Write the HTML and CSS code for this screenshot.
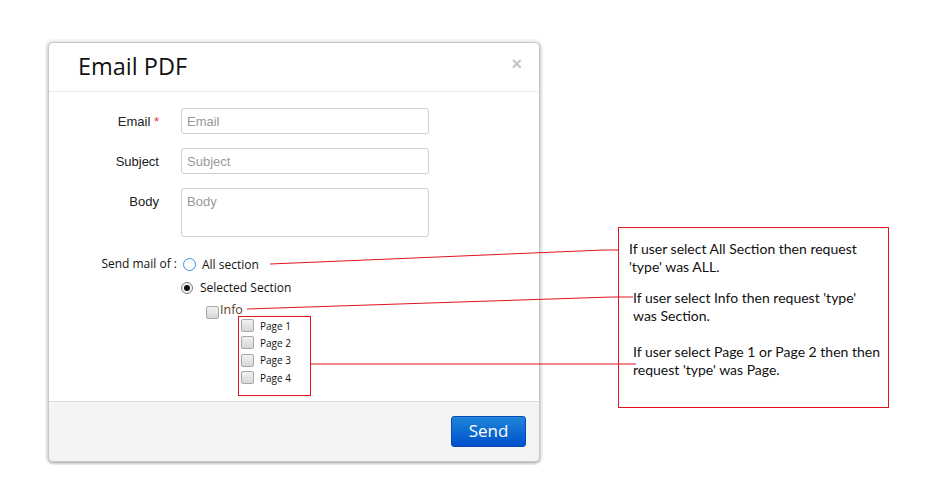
FILE: index.html
```html
<!DOCTYPE html>
<html>
<head>
<meta charset="utf-8">
<link rel="stylesheet" href="styles.css">
</head>
<body>
<div class="page">
  <div class="modal">
    <div class="modal-header">
      <h1 class="title">Email PDF</h1>
      <span class="close">&times;</span>
    </div>
    <div class="modal-body">
      <div class="form-row">
        <label class="label">Email <span class="req">*</span></label>
        <div class="input"><span class="ph">Email</span></div>
      </div>
      <div class="form-row">
        <label class="label">Subject</label>
        <div class="input"><span class="ph">Subject</span></div>
      </div>
      <div class="form-row">
        <label class="label">Body</label>
        <div class="input textarea"><span class="ph">Body</span></div>
      </div>
      <div class="options">
        <div class="opt-row">
          <span class="opt-label">Send mail of :</span>
          <span class="radio radio-focus"></span>
          <span class="opt-text">All section</span>
        </div>
        <div class="opt-row indent1">
          <span class="radio radio-on"></span>
          <span class="opt-text">Selected Section</span>
        </div>
        <div class="opt-row indent2">
          <span class="check"></span>
          <span class="info-text">Info</span>
        </div>
        <div class="pages">
          <div class="page-row"><span class="check"></span><span class="page-text">Page 1</span></div>
          <div class="page-row"><span class="check"></span><span class="page-text">Page 2</span></div>
          <div class="page-row"><span class="check"></span><span class="page-text">Page 3</span></div>
          <div class="page-row"><span class="check"></span><span class="page-text">Page 4</span></div>
        </div>
      </div>
    </div>
    <div class="modal-footer">
      <button class="send">Send</button>
    </div>
  </div>
</div>

<div class="note">
  <p class="n1">If user select All Section then request<br>'type' was ALL.</p>
  <p class="n2">If user select Info then request 'type'<br>was Section.</p>
  <p class="n3">If user select Page 1 or Page 2 then then<br>request 'type' was Page.</p>
</div>

<svg class="lines" width="928" height="501" viewBox="0 0 928 501">
  <polyline points="270,264 604,250 618,250" fill="none" stroke="#e0141e" stroke-width="1"/>
  <polyline points="247,309 612,297 633,297" fill="none" stroke="#e0141e" stroke-width="1"/>
  <line x1="311" y1="364" x2="636" y2="364" stroke="#e0141e" stroke-width="1"/>
</svg>
</body>
</html>
```

FILE: styles.css
```css
html, body {
  margin: 0;
  padding: 0;
  background: #ffffff;
}
body {
  width: 928px;
  height: 501px;
  position: relative;
  overflow: hidden;
  font-family: "Liberation Sans", Arial, sans-serif;
}
.page {
  padding: 42px 0 0 48px;
}
.modal {
  width: 490px;
  height: 418px;
  border: 1px solid #c8c8c8;
  border-radius: 5px;
  background: #fff;
  box-shadow: 0 1px 3px rgba(0,0,0,0.35), 0 0 0 3px rgba(0,0,0,0.04);
  display: flex;
  flex-direction: column;
  overflow: hidden;
}
.modal-header {
  height: 48px;
  border-bottom: 1px solid #e8e8e8;
  display: flex;
  align-items: center;
  justify-content: space-between;
  padding: 0 17px 0 29px;
  flex: none;
}
.title {
  margin: 0;
  font-family: "Open Sans", "Noto Sans", sans-serif;
  font-weight: 400;
  font-size: 23.5px;
  color: #111;
  margin-top: -2px;
}
.close {
  font-family: "Liberation Sans", Arial, sans-serif;
  font-weight: bold;
  font-size: 18px;
  color: #c4c4c4;
  margin-top: -6px;
}
.modal-body {
  flex: 1;
  padding-top: 16px;
}
.form-row {
  display: flex;
  align-items: flex-start;
  margin-bottom: 14px;
}
.label {
  width: 110px;
  text-align: right;
  font-size: 13px;
  color: #222;
  padding-top: 6px;
  margin-right: 22px;
}
.req {
  color: #e33;
}
.input {
  border: 1px solid #cfcfcf;
  border-radius: 3px;
  font-size: 13px;
  color: #999;
  padding: 5px 0 0 5px;
  box-sizing: border-box;
  height: 26px;
  width: 248px;
}
.input.textarea {
  height: 49px;
  padding-top: 5px;
}
.options {
  padding-top: 2px;
  font-family: "Open Sans", "Noto Sans", sans-serif;
  font-size: 12px;
  color: #111;
}
.opt-row {
  display: flex;
  align-items: center;
  height: 23px;
}
.opt-label {
  width: 128px;
  text-align: right;
  margin-right: 6px;
  margin-top: -2px;
}
.indent1 {
  padding-left: 132px;
}
.indent2 {
  padding-left: 157px;
  height: 22px;
}
.radio {
  border-radius: 50%;
  box-sizing: border-box;
  margin-right: 6px;
  position: relative;
  flex: none;
}
.radio-focus {
  border: 1px solid #3a8ee6;
  width: 13px;
  height: 13px;
  background: #fff;
}
.radio-on {
  border: 1px solid #7a7a7a;
  background: #f4f4f4;
  width: 12px;
  height: 12px;
  margin-right: 7px;
}
.radio-on::after {
  content: "";
  position: absolute;
  left: 2px;
  top: 2px;
  width: 6px;
  height: 6px;
  border-radius: 50%;
  background: #111;
}
.opt-text {
  font-size: 12px;
  margin-top: -1px;
}
.check {
  width: 11px;
  height: 11px;
  border: 1px solid #a8a8a8;
  border-radius: 2px;
  background: linear-gradient(#f2f2f2, #d6d6d6);
  flex: none;
}
.indent2 .check {
  margin-top: 4px;
}
.info-text {
  font-size: 12.5px;
  color: #5a3b1e;
  margin-left: 1px;
  margin-top: -2px;
}
.pages {
  margin-left: 189px;
  width: 73px;
  height: 80px;
  border: 1px solid #e0141e;
  box-sizing: border-box;
  padding: 0 0 0 2px;
  margin-top: -5px;
}
.page-row {
  display: flex;
  align-items: center;
  height: 17.3px;
}
.page-text {
  font-size: 10px;
  color: #111;
  margin-left: 6px;
}
.modal-footer {
  height: 60px;
  flex: none;
  border-top: 1px solid #dcdcdc;
  background: #f4f4f4;
  display: flex;
  justify-content: flex-end;
  align-items: flex-start;
  padding: 14px 13px 0 0;
  box-sizing: border-box;
}
.send {
  width: 75px;
  height: 31px;
  border: 1px solid #0848b8;
  border-radius: 3px;
  background: linear-gradient(#1e86d8, #0050cc);
  color: #fff;
  font-family: "Open Sans", "Noto Sans", sans-serif;
  font-size: 17px;
  padding: 0 0 2px 0;
}
.note {
  position: absolute;
  left: 618px;
  top: 227px;
  width: 271px;
  height: 181px;
  border: 1px solid #e0141e;
  box-sizing: border-box;
  font-family: Lato, "Open Sans", sans-serif;
  font-size: 14px;
  color: #111;
  line-height: 18px;
}
.note p {
  margin: 0;
  position: absolute;
  white-space: nowrap;
}
.n1 { left: 10px; top: 12px; }
.n2 { left: 14px; top: 61px; }
.n3 { left: 14px; top: 115px; }
.lines {
  position: absolute;
  left: 0;
  top: 0;
}
```
